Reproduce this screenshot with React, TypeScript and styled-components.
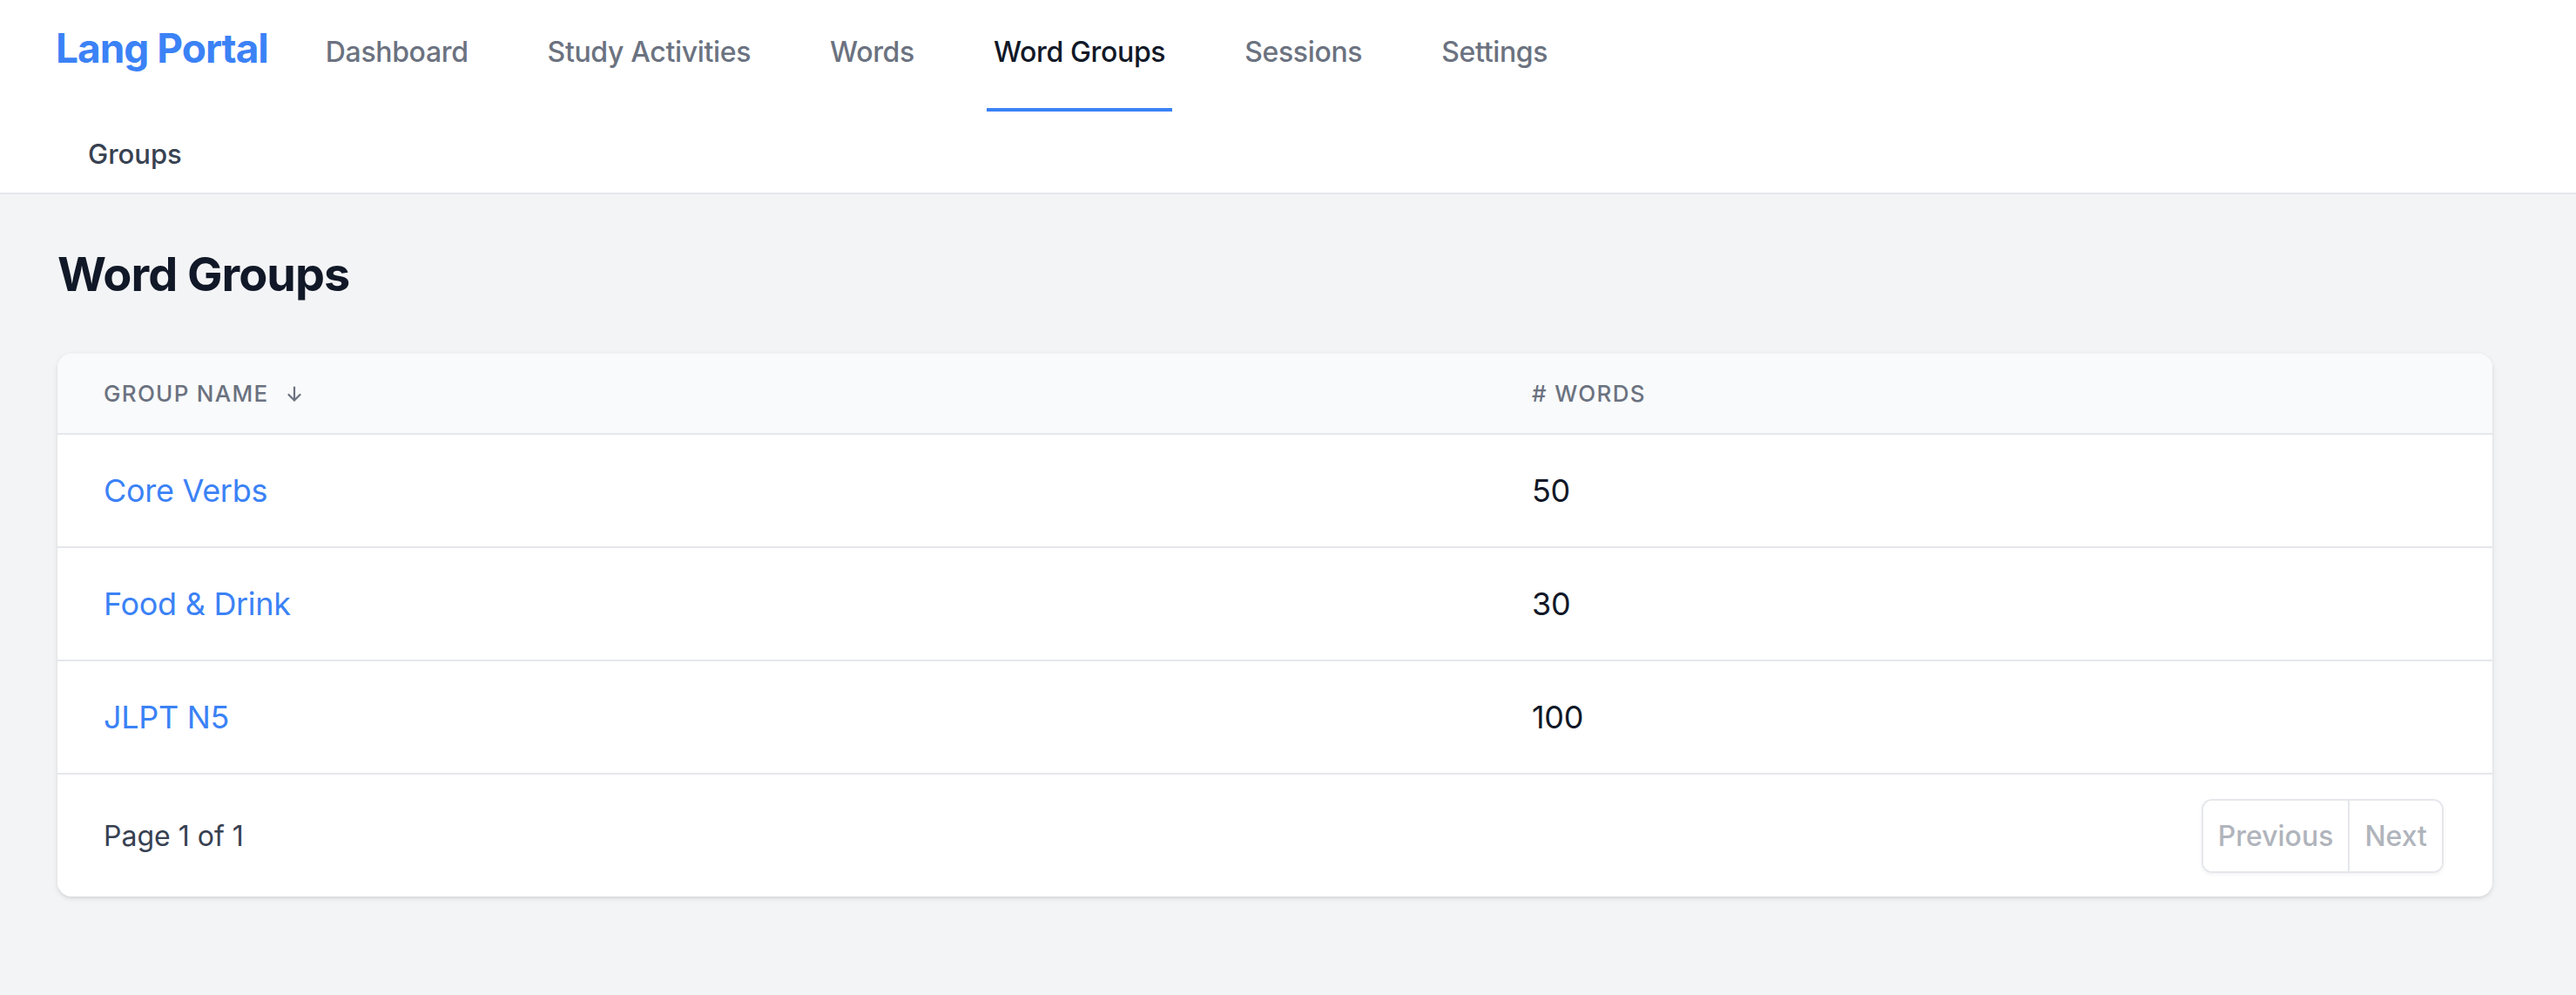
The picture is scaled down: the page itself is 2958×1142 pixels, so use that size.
import React from 'react'
import styled, { createGlobalStyle } from 'styled-components'

const GlobalStyle = createGlobalStyle`
  html, body {
    margin: 0;
    padding: 0;
  }

  body {
    font-family: Inter, 'Noto Sans', 'Liberation Sans', sans-serif;
    background: #f3f4f6;
    -webkit-font-smoothing: antialiased;
  }

  * {
    box-sizing: border-box;
  }
`

const navItems = ['Dashboard', 'Study Activities', 'Words', 'Word Groups', 'Sessions', 'Settings']

const groups = [
  { name: 'Core Verbs', count: 50 },
  { name: 'Food & Drink', count: 30 },
  { name: 'JLPT N5', count: 100 },
]

const SortArrow = () => (
  <svg width='18' height='18' viewBox='0 0 18 18' fill='none' stroke='#6b7280' strokeWidth='2.2' strokeLinecap='round' strokeLinejoin='round'>
    <path d='M9 1.5V16.5' />
    <path d='M2.5 10L9 16.5L15.5 10' />
  </svg>
)

const App = () => {
  return (
    <Page>
      <GlobalStyle />
      <Header>
        <TopRow>
          <Logo>Lang Portal</Logo>
          <Nav>
            {navItems.map((item) => (
              <NavLink key={item} $active={item === 'Word Groups'}>
                {item}
              </NavLink>
            ))}
          </Nav>
        </TopRow>
        <SubRow>
          <Crumb>Groups</Crumb>
        </SubRow>
      </Header>

      <Main>
        <Title>Word Groups</Title>
        <Card>
          <HeadRow>
            <HeadCell>
              GROUP NAME
              <ArrowWrap>
                <SortArrow />
              </ArrowWrap>
            </HeadCell>
            <HeadCell># WORDS</HeadCell>
          </HeadRow>
          {groups.map((g) => (
            <Row key={g.name}>
              <Cell>
                <GroupLink>{g.name}</GroupLink>
              </Cell>
              <Cell>{g.count}</Cell>
            </Row>
          ))}
          <Footer>
            <PageInfo>Page 1 of 1</PageInfo>
            <ButtonGroup>
              <PageButton disabled>Previous</PageButton>
              <PageButton disabled $divider>
                Next
              </PageButton>
            </ButtonGroup>
          </Footer>
        </Card>
      </Main>
    </Page>
  )
}

const Page = styled.div`
  min-height: 100vh;
  background: #f3f4f6;
`

const Header = styled.header`
  background: #ffffff;
  border-bottom: 2px solid #e5e7eb;
`

const TopRow = styled.div`
  display: flex;
  height: 128px;
  padding-left: 64px;
`

const Logo = styled.div`
  align-self: flex-start;
  margin-top: 32px;
  font-size: 46px;
  line-height: 46px;
  font-weight: 700;
  letter-spacing: -1px;
  color: #3b82f6;
`

const Nav = styled.nav`
  display: flex;
  gap: 75px;
  margin-left: 58px;
`

const NavLink = styled.a<{ $active?: boolean }>`
  display: flex;
  align-items: center;
  padding: 0 8px 5px;
  font-size: 32px;
  font-weight: 500;
  letter-spacing: -0.35px;
  color: ${(p) => (p.$active ? '#111827' : '#6b7280')};
  border-bottom: 4px solid ${(p) => (p.$active ? '#3b82f6' : 'transparent')};
  cursor: pointer;
`

const SubRow = styled.div`
  display: flex;
  align-items: center;
  height: 93px;
  padding: 3px 0 0 101px;
`

const Crumb = styled.span`
  font-size: 31px;
  font-weight: 500;
  color: #374151;
`

const Main = styled.main`
  padding: 59px 96px 0 66px;
`

const Title = styled.h1`
  margin: 0 0 59px;
  font-size: 54px;
  line-height: 65px;
  font-weight: 700;
  letter-spacing: -1px;
  color: #111827;
`

const Card = styled.section`
  background: #ffffff;
  border-radius: 16px;
  overflow: hidden;
  box-shadow: 0 2px 6px rgba(0, 0, 0, 0.1), 0 2px 4px -2px rgba(0, 0, 0, 0.1);
`

const Grid = styled.div`
  display: grid;
  grid-template-columns: 1640px 1fr;
  border-bottom: 2px solid #e5e7eb;
`

const HeadRow = styled(Grid)`
  height: 93px;
  background: #f9fafb;
`

const HeadCell = styled.div`
  display: flex;
  align-items: center;
  padding: 0 53px;
  font-size: 26px;
  font-weight: 500;
  letter-spacing: 1.3px;
  text-transform: uppercase;
  color: #6b7280;
`

const ArrowWrap = styled.span`
  display: flex;
  margin-left: 20px;
`

const Row = styled(Grid)`
  height: 130px;
`

const Cell = styled.div`
  display: flex;
  align-items: center;
  padding: 0 53px;
  font-size: 36px;
  letter-spacing: -0.3px;
  color: #111827;
`

const GroupLink = styled.a`
  color: #3b82f6;
  cursor: pointer;
`

const Footer = styled.div`
  display: flex;
  align-items: center;
  justify-content: space-between;
  height: 140px;
  padding: 0 56px 0 53px;
`

const PageInfo = styled.span`
  font-size: 32px;
  color: #374151;
`

const ButtonGroup = styled.div`
  display: flex;
  height: 85px;
  border: 2px solid #e5e7eb;
  border-radius: 12px;
  box-shadow: 0 2px 4px rgba(0, 0, 0, 0.05);
  overflow: hidden;
`

const PageButton = styled.button<{ $divider?: boolean }>`
  display: flex;
  align-items: center;
  padding: 0 17px;
  border: none;
  border-left: ${(p) => (p.$divider ? '2px solid #e5e7eb' : 'none')};
  background: #ffffff;
  font-family: inherit;
  font-size: 32px;
  font-weight: 500;
  color: #b0b4bc;
  cursor: not-allowed;
`

export default App
